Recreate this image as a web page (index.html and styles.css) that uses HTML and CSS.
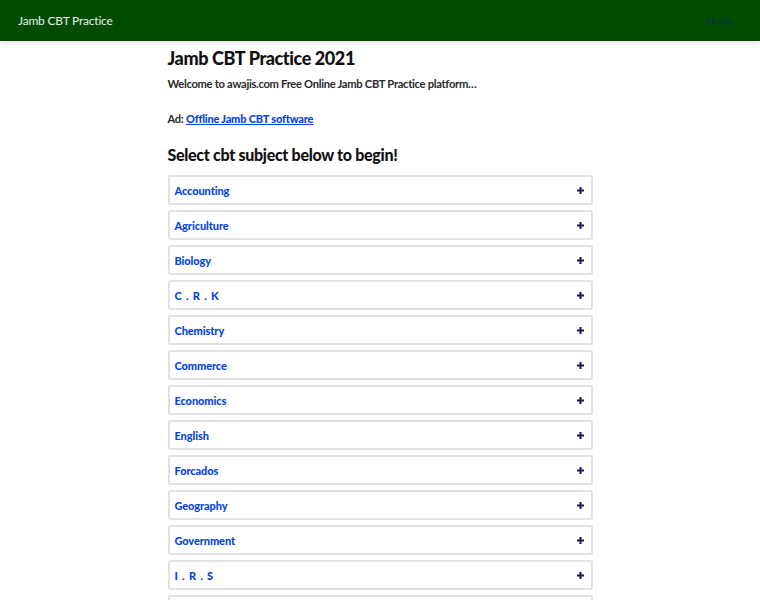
FILE: index.html
```html
<!DOCTYPE html>
<html lang="en">
<head>
    <meta charset="UTF-8">
    <meta name="viewport" content="width=device-width, initial-scale=1.0">
    <title>Jamb CBT Practice</title>
    <link rel="stylesheet" href="styles.css">
</head>
<body>

    <div class="navbar">
        <a class="brand" href="#">Jamb CBT Practice</a>
        <a class="nav-link" href="#">Home</a>
    </div>

    <div class="container">
        <h1>Jamb CBT Practice 2021</h1>
        <p class="intro">Welcome to awajis.com Free Online Jamb CBT Practice platform…</p>
        <p class="ad">Ad: <a href="#">Offline Jamb CBT software</a></p>

        <h2>Select cbt subject below to begin!</h2>

        <div class="subjects">
            <div class="subject"><a href="#">Accounting</a><svg class="plus" viewBox="0 0 8 8"><path d="M4 0V8M0 4H8"/></svg></div>
            <div class="subject"><a href="#">Agriculture</a><svg class="plus" viewBox="0 0 8 8"><path d="M4 0V8M0 4H8"/></svg></div>
            <div class="subject"><a href="#">Biology</a><svg class="plus" viewBox="0 0 8 8"><path d="M4 0V8M0 4H8"/></svg></div>
            <div class="subject"><a href="#" class="spaced">C . R . K</a><svg class="plus" viewBox="0 0 8 8"><path d="M4 0V8M0 4H8"/></svg></div>
            <div class="subject"><a href="#">Chemistry</a><svg class="plus" viewBox="0 0 8 8"><path d="M4 0V8M0 4H8"/></svg></div>
            <div class="subject"><a href="#">Commerce</a><svg class="plus" viewBox="0 0 8 8"><path d="M4 0V8M0 4H8"/></svg></div>
            <div class="subject"><a href="#">Economics</a><svg class="plus" viewBox="0 0 8 8"><path d="M4 0V8M0 4H8"/></svg></div>
            <div class="subject"><a href="#">English</a><svg class="plus" viewBox="0 0 8 8"><path d="M4 0V8M0 4H8"/></svg></div>
            <div class="subject"><a href="#">Forcados</a><svg class="plus" viewBox="0 0 8 8"><path d="M4 0V8M0 4H8"/></svg></div>
            <div class="subject"><a href="#">Geography</a><svg class="plus" viewBox="0 0 8 8"><path d="M4 0V8M0 4H8"/></svg></div>
            <div class="subject"><a href="#">Government</a><svg class="plus" viewBox="0 0 8 8"><path d="M4 0V8M0 4H8"/></svg></div>
            <div class="subject"><a href="#" class="spaced">I . R . S</a><svg class="plus" viewBox="0 0 8 8"><path d="M4 0V8M0 4H8"/></svg></div>
            <div class="subject"><a href="#">Literature</a><svg class="plus" viewBox="0 0 8 8"><path d="M4 0V8M0 4H8"/></svg></div>
        </div>
    </div>

</body>
</html>
```

FILE: styles.css
```css
body {
    font-family: Lato, "Noto Sans", sans-serif;
    margin: 0;
    padding: 0;
    background: white;
    color: #111;
}
.navbar {
    display: flex;
    justify-content: space-between;
    align-items: center;
    height: 41px;
    padding: 0 27px 0 18px;
    background-color: #004d00;
    box-shadow: 0 2px 5px rgba(0, 0, 0, 0.12);
}
.brand {
    color: #e6efe6;
    font-size: 12px;
    letter-spacing: -0.2px;
    text-decoration: none;
}
.nav-link {
    color: #0d2a5a;
    font-size: 10px;
    text-decoration: none;
}
.container {
    max-width: 425px;
    margin: 0 auto;
    padding-top: 6px;
}
h1 {
    font-size: 18px;
    font-weight: 900;
    letter-spacing: -0.4px;
    margin: 0 0 8px;
}
.intro {
    font-size: 11.2px;
    font-weight: bold;
    color: #2a2a2a;
    letter-spacing: -0.3px;
    margin: 0 0 22px;
}
.ad {
    font-size: 11px;
    font-weight: bold;
    color: #2a2a2a;
    letter-spacing: -0.2px;
    margin: 0 0 20px;
}
.ad a {
    color: #0645e0;
    font-weight: 900;
}
h2 {
    font-size: 16px;
    font-weight: 900;
    letter-spacing: -0.3px;
    margin: 0 0 11px;
}
.subjects {
    display: flex;
    flex-direction: column;
    gap: 5px;
}
.subject {
    display: flex;
    justify-content: space-between;
    align-items: center;
    height: 26px;
    padding: 0 7px 0 5px;
    border: 2px solid #e2e2e2;
    border-radius: 2px;
}
.subject a {
    color: #0645e0;
    font-size: 11px;
    font-weight: 900;
    letter-spacing: -0.1px;
    text-decoration: none;
}
.subject a.spaced {
    letter-spacing: 0.8px;
}
.plus {
    width: 7px;
    height: 7px;
    stroke: #1c1c58;
    stroke-width: 2.4;
}
```
